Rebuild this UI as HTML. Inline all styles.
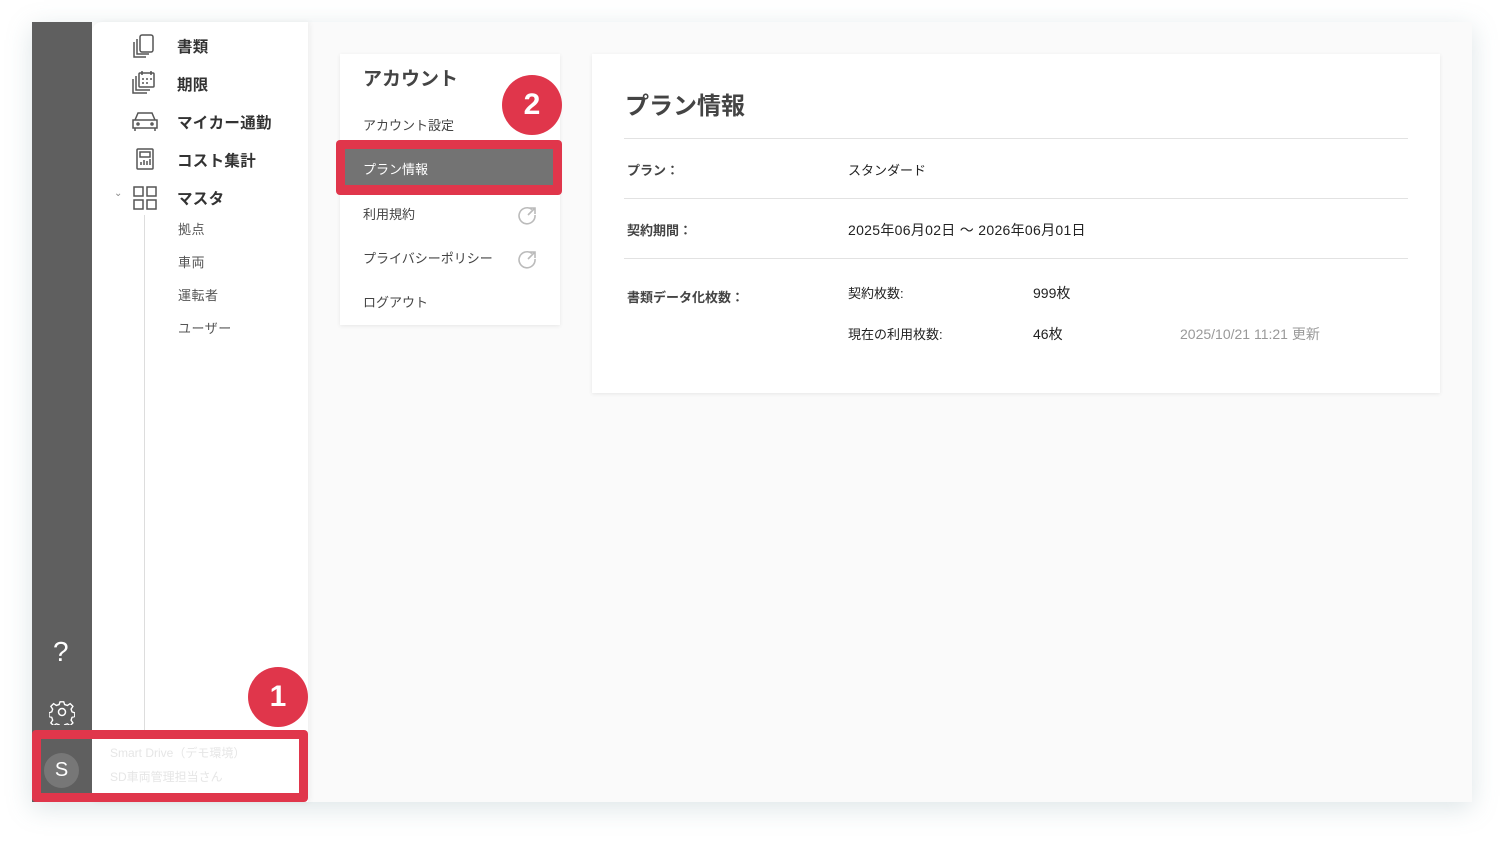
<!DOCTYPE html>
<html><head><meta charset="utf-8"><style>
*{margin:0;padding:0;box-sizing:border-box}
body{width:1504px;height:844px;background:#fff;position:relative;overflow:hidden;font-family:"Liberation Sans","Noto Sans CJK JP",sans-serif;color:#333}
.a{position:absolute}
.frame{left:32px;top:22px;width:1440px;height:780px;background:#fafafa;box-shadow:0 6px 24px rgba(120,150,160,.25)}
.side{left:32px;top:22px;width:60px;height:780px;background:#5f5f5f}
.nav{left:92px;top:22px;width:216px;height:780px;background:#fff;border-top-left-radius:10px;box-shadow:2px 0 6px rgba(0,0,0,.05)}
.ni{font-size:15.5px;font-weight:bold;color:#333;letter-spacing:.3px}
.si{font-size:13px;color:#555;letter-spacing:.5px}
.card{background:#fff;box-shadow:0 1px 4px rgba(0,0,0,.08)}
.badge{width:60px;height:60px;border-radius:50%;background:#e0364b;color:#fff;font-weight:bold;font-size:30px;text-align:center;line-height:60px}
.m{font-size:13px;color:#444}
.hr{height:1px;background:#e2e2e2;left:624px;width:784px}
.t{font-size:13px;color:#222}
</style></head><body>
<div class="a frame"></div>
<div class="a side"></div>
<div class="a nav"></div>
<svg class="a" style="left:130px;top:32px" width="30" height="180" fill="none" stroke="#555" stroke-width="1.5">
<rect x="10" y="3" width="13" height="17" rx="2"/><path d="M7 7v15h12M4 10v15h12"/>
<rect x="9" y="41" width="15" height="14" rx="1"/><path d="M12 39v4M21 39v4M12 47h2M16 47h2M20 47h2M12 51h2M16 51h2M6 44v14h14M3 47v14h14" />
<path d="M5 88l3-7h14l3 7M3 88h24v8H3zM5 96v3M25 96v3"/><circle cx="8" cy="92" r="1"/><circle cx="22" cy="92" r="1"/>
<rect x="7" y="117" width="16" height="20" rx="1"/><rect x="10" y="120" width="10" height="5"/><path d="M11 133v-3M14 133v-5M17 133v-4M20 133v-6"/>
<rect x="4" y="155" width="9" height="9"/><rect x="17" y="155" width="9" height="9"/><rect x="4" y="168" width="9" height="9"/><rect x="17" y="168" width="9" height="9"/>
</svg>
<div class="a ni" style="left:177px;top:35px">書類</div>
<div class="a ni" style="left:177px;top:73px">期限</div>
<div class="a ni" style="left:177px;top:111px">マイカー通勤</div>
<div class="a ni" style="left:177px;top:149px">コスト集計</div>
<div class="a ni" style="left:177px;top:187px">マスタ</div>
<div class="a" style="left:114px;top:188px;font-size:10px;color:#888">⌄</div>
<div class="a" style="left:144px;top:215px;width:1px;height:515px;background:#ddd"></div>
<div class="a si" style="left:178px;top:219px">拠点</div>
<div class="a si" style="left:178px;top:252px">車両</div>
<div class="a si" style="left:178px;top:285px">運転者</div>
<div class="a si" style="left:178px;top:318px">ユーザー</div>
<div class="a" style="left:53px;top:636px;color:#fff;font-size:28px">?</div>
<svg class="a" style="left:49px;top:699px" width="26" height="26" fill="none" stroke="#fff" stroke-width="1.5"><path d="M11 2h4l1 3 3 1 3-2 3 3-2 3 1 3 3 1v4l-3 1-1 3 2 3-3 3-3-2-3 1-1 3h-4l-1-3-3-1-3 2-3-3 2-3-1-3-3-1v-4l3-1 1-3-2-3 3-3 3 2 3-1z" transform="scale(.92) translate(1 1)"/><circle cx="13" cy="13" r="3.5"/></svg>
<div class="a" style="left:32px;top:730px;width:276px;height:72px;background:#e0364b;border-radius:4px"></div>
<div class="a" style="left:41px;top:739px;width:51px;height:54px;background:#5f5f5f"></div>
<div class="a" style="left:92px;top:739px;width:207px;height:54px;background:#fff"></div>
<div class="a" style="left:44px;top:753px;width:35px;height:35px;border-radius:50%;background:#777;color:#fff;font-size:20px;text-align:center;line-height:35px">S</div>
<div class="a" style="left:110px;top:744px;font-size:12px;color:#e6e6e6">Smart Drive（デモ環境）</div>
<div class="a" style="left:110px;top:768px;font-size:12px;color:#e6e6e6">SD車両管理担当さん</div>
<div class="a badge" style="left:248px;top:667px">1</div>
<div class="a card" style="left:340px;top:54px;width:220px;height:271px"></div>
<div class="a" style="left:363px;top:64px;font-size:19px;font-weight:bold;color:#444">アカウント</div>
<div class="a m" style="left:363px;top:115px">アカウント設定</div>
<div class="a" style="left:336px;top:140px;width:226px;height:55px;background:#e0364b;border-radius:4px"></div>
<div class="a" style="left:345px;top:149px;width:208px;height:36px;background:#737373"></div>
<div class="a" style="left:363px;top:159px;font-size:13px;color:#fff">プラン情報</div>
<div class="a m" style="left:363px;top:204px">利用規約</div>
<div class="a m" style="left:363px;top:248px">プライバシーポリシー</div>
<div class="a m" style="left:363px;top:292px">ログアウト</div>
<svg class="a" style="left:518px;top:205px" width="20" height="64" fill="none" stroke="#bbb" stroke-width="1.6"><path d="M14 4.5A8 8 0 1 0 17 10M11 3h6v6M17 3l-7 7"/><path transform="translate(0 44)" d="M14 4.5A8 8 0 1 0 17 10M11 3h6v6M17 3l-7 7"/></svg>
<div class="a badge" style="left:502px;top:75px">2</div>
<div class="a card" style="left:592px;top:54px;width:848px;height:339px"></div>
<div class="a" style="left:625px;top:86px;font-size:24px;font-weight:bold;color:#444">プラン情報</div>
<div class="a hr" style="top:138px"></div>
<div class="a hr" style="top:198px"></div>
<div class="a hr" style="top:258px"></div>
<div class="a t" style="left:627px;top:160px;font-weight:bold;color:#444">プラン：</div>
<div class="a t" style="left:848px;top:160px">スタンダード</div>
<div class="a t" style="left:627px;top:220px;font-weight:bold;color:#444">契約期間：</div>
<div class="a t" style="left:848px;top:220px;font-size:14px;letter-spacing:.3px">2025年06月02日 〜 2026年06月01日</div>
<div class="a t" style="left:627px;top:287px;font-weight:bold;color:#444">書類データ化枚数：</div>
<div class="a t" style="left:848px;top:283px">契約枚数:</div>
<div class="a t" style="left:1033px;top:283px;font-size:14px">999枚</div>
<div class="a t" style="left:848px;top:324px">現在の利用枚数:</div>
<div class="a t" style="left:1033px;top:324px;font-size:14px">46枚</div>
<div class="a t" style="left:1180px;top:324px;color:#999;font-size:14px">2025/10/21 11:21 更新</div>
</body></html>
